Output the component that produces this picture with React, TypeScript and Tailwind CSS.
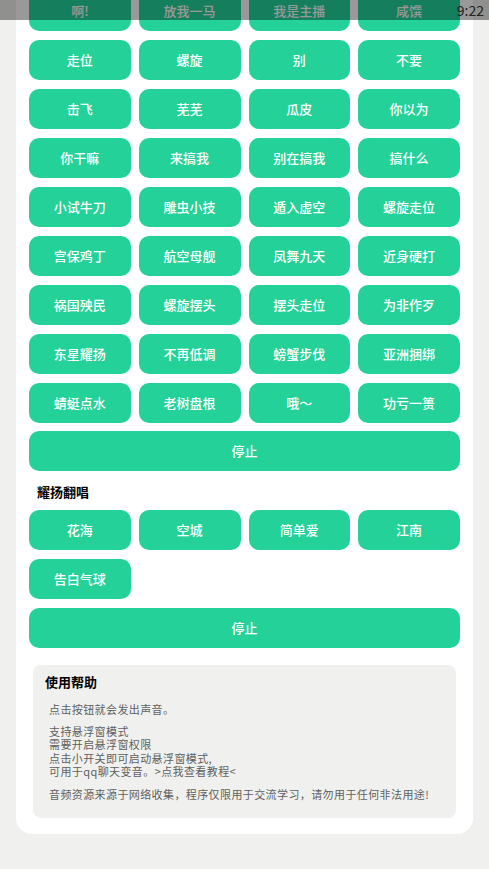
import React from 'react';

const rows = [
  ['啊!', '放我一马', '我是主播', '咸馔'],
  ['走位', '螺旋', '别', '不要'],
  ['击飞', '芜芜', '瓜皮', '你以为'],
  ['你干嘛', '来搞我', '别在搞我', '搞什么'],
  ['小试牛刀', '雕虫小技', '遁入虚空', '螺旋走位'],
  ['宫保鸡丁', '航空母舰', '凤舞九天', '近身硬打'],
  ['祸国殃民', '螺旋摆头', '摆头走位', '为非作歹'],
  ['东星耀扬', '不再低调', '螃蟹步伐', '亚洲捆绑'],
  ['蜻蜓点水', '老树盘根', '哦～', '功亏一篑'],
];

const songs = ['花海', '空城', '简单爱', '江南', '告白气球'];

function SoundButton({ label }: { label: string }) {
  return (
    <button className="flex h-[40px] items-center justify-center rounded-[10px] bg-[#24d299] text-[13px] font-medium text-white">
      {label}
    </button>
  );
}

function StopButton() {
  return (
    <button className="flex h-[40px] w-full items-center justify-center rounded-[10px] bg-[#24d299] text-[13px] font-medium text-white">
      停止
    </button>
  );
}

export default function App() {
  return (
    <div
      className="relative min-h-[869px] overflow-hidden bg-[#f0f1ee]"
      style={{ fontFamily: '"Noto Sans CJK SC", "Noto Sans", sans-serif' }}
    >
      <div className="absolute inset-x-0 top-0 z-10 flex h-[20px] items-center justify-end bg-black/40 pr-[5px]">
        <span className="text-[14px] leading-none text-[#222]">9:22</span>
      </div>

      <div className="mx-[16px] -mt-[9px] rounded-b-[16px] bg-white px-[13px] pb-[16px]">
        <div className="grid grid-cols-4 gap-x-[8px] gap-y-[9px]">
          {rows.flat().map((label, i) => (
            <SoundButton key={i} label={label} />
          ))}
        </div>
        <div className="mt-[8px]">
          <StopButton />
        </div>

        <h2 className="mt-[10px] mb-[7px] pl-[8px] text-[13px] leading-[22px] font-bold text-black">
          耀扬翻唱
        </h2>
        <div className="grid grid-cols-4 gap-x-[8px] gap-y-[9px]">
          {songs.map((label) => (
            <SoundButton key={label} label={label} />
          ))}
        </div>
        <div className="mt-[9px]">
          <StopButton />
        </div>

        <div className="mx-[4px] mt-[17px] rounded-[8px] bg-[#f0f1ee] pt-[7px] pr-[8px] pb-[17px] pl-[12px]">
          <h3 className="text-[13px] leading-[20px] font-bold text-black">使用帮助</h3>
          <div className="mt-[11px] pl-[4px] text-[11px] leading-[13.5px] tracking-[0.4px] text-[#5f5f5f]">
            <p>点击按钮就会发出声音。</p>
            <p className="mt-[8px]">
              支持悬浮窗模式
              <br />
              需要开启悬浮窗权限
              <br />
              点击小开关即可启动悬浮窗模式,
              <br />
              可用于qq聊天变音。&gt;点我查看教程&lt;
            </p>
            <p className="mt-[9px] whitespace-nowrap">
              音频资源来源于网络收集，程序仅限用于交流学习，请勿用于任何非法用途!
            </p>
          </div>
        </div>
      </div>
    </div>
  );
}
